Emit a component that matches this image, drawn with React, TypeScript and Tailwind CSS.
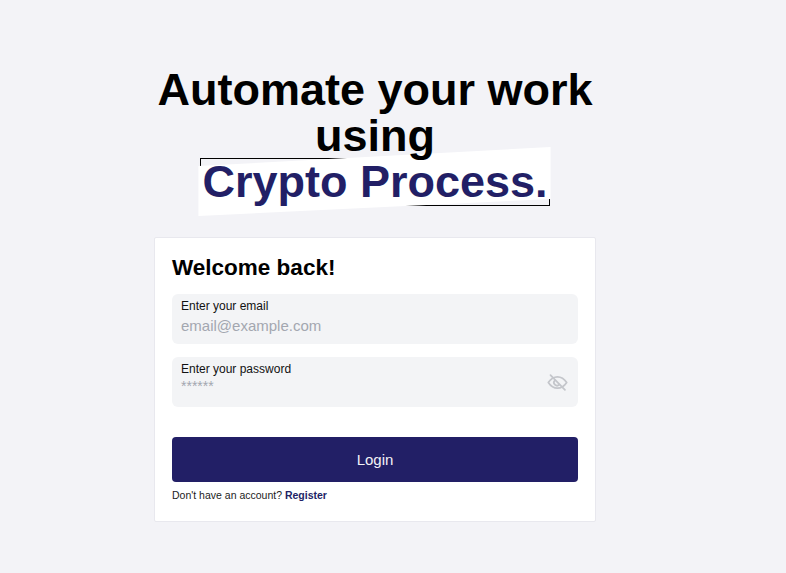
export default function App() {
  return (
    <div className="min-h-screen bg-[#f3f3f7] font-['Liberation_Sans',Arial,sans-serif] pt-[67px] pl-[154px]">
      <div className="w-[442px]">
        {/* Headline */}
        <h1 className="text-center text-[45px] leading-[46px] font-bold text-black whitespace-nowrap">
          <span className="block">Automate your work</span>
          <span className="block relative z-10">using</span>
          <span className="relative inline-block px-[2px] text-[#221f66]">
            <span className="absolute left-0 -top-[1px] right-0 -bottom-[1px] border border-black" />
            <span className="absolute -left-[2px] -top-[12px] -right-[1px] -bottom-[11px] bg-white [clip-path:polygon(0_19px,100%_0,100%_52px,0_100%)]" />
            <span className="relative">Crypto Process.</span>
          </span>
        </h1>

        {/* Card */}
        <div className="mt-[32px] h-[285px] rounded-[2px] border border-[#e8e8ee] bg-white px-[17px] pt-[15px]">
          <h2 className="text-[22.5px] leading-[30px] font-bold text-black">Welcome back!</h2>

          <div className="mt-[11px] h-[50px] rounded-md bg-gray-100 px-[9px] pt-[4px]">
            <div className="text-[12px] leading-[16px] text-[#111]">Enter your email</div>
            <div className="mt-[2px] text-[15px] leading-[20px] text-[#a3a7b0]">email@example.com</div>
          </div>

          <div className="relative mt-[13px] h-[50px] rounded-md bg-gray-100 px-[9px] pt-[4px]">
            <div className="text-[12px] leading-[16px] text-[#111]">Enter your password</div>
            <div className="text-[14px] leading-[18px] text-[#a3a7b0]">******</div>
            <svg className="absolute right-[10px] top-[15px] size-[21px] text-[#c4c6cb]" viewBox="0 0 24 24" fill="none" stroke="currentColor" strokeWidth={2} strokeLinecap="round" strokeLinejoin="round">
              <path d="M1.5 12C4.5 7.5 8 5.500 12 5.500s7.500 2 10.500 6.500c-3 4.500-6.500 6.500-10.500 6.500S4.500 16.500 1.500 12Z" />
              <path d="M4 3.500l16.500 17" />
              <path d="M9 9.500a3.500 3.500 0 0 0 5 5" />
            </svg>
          </div>

          <button className="mt-[30px] flex h-[45px] w-full items-center justify-center rounded-[4px] bg-[#221f66] pt-[2px] text-[15px] text-[#f2f2f6]">
            Login
          </button>

          <p className="mt-[5px] text-[10.5px] leading-[16px] text-[#1c1c1c]">
            Don't have an account? <span className="font-bold text-[#221f66]">Register</span>
          </p>
        </div>
      </div>
    </div>
  )
}
